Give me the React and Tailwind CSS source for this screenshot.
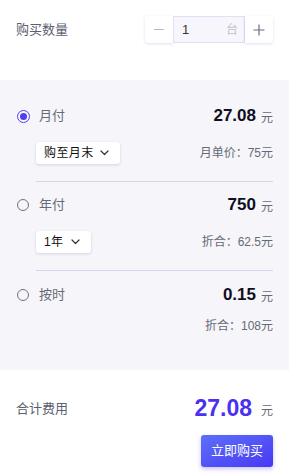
import React, { useState } from "react";

const font = { fontFamily: '"Liberation Sans", "Noto Sans CJK SC", sans-serif' };

function Radio({ checked }) {
  if (checked) {
    return (
      <span className="w-[13px] h-[13px] rounded-full border-[1.5px] border-[#4f3ff0] flex items-center justify-center">
        <span className="w-[7px] h-[7px] rounded-full bg-[#4f3ff0]" />
      </span>
    );
  }
  return <span className="w-[12px] h-[12px] rounded-full border-[1.5px] border-[#6e7384]" />;
}

function Chevron() {
  return (
    <svg width="9" height="6" viewBox="0 0 9 6" fill="none">
      <path d="M1 1l3.5 3.5L8 1" stroke="#333" strokeWidth="1.2" strokeLinecap="round" strokeLinejoin="round" />
    </svg>
  );
}

function Dropdown({ label, width }) {
  return (
    <div
      className={`h-[22px] ${width} bg-white rounded-[3px] shadow-[0_1px_3px_rgba(60,60,120,0.18)] flex items-center justify-between pl-[8px] pr-[11px] text-[12px] tracking-[0.4px] text-[#111]`}
    >
      <span>{label}</span>
      <Chevron />
    </div>
  );
}

function Option({ checked, name, price, children, note }) {
  return (
    <div>
      <div className="flex items-center h-[20px]">
        <div className="w-[23px] pl-[1px] flex items-center">
          <Radio checked={checked} />
        </div>
        <span className="text-[13px] text-[#666a75]">{name}</span>
        <span className="ml-auto text-[17px] font-bold text-[#0f0f1e]">{price}</span>
        <span className="ml-[5px] text-[12px] text-[#666a75] mt-[3px]">元</span>
      </div>
      <div className="flex items-center justify-between pl-[20px] mt-[16px] h-[22px]">
        <div>{children}</div>
        <span className="text-[12px] text-[#666a75]">{note}</span>
      </div>
    </div>
  );
}

export default function App() {
  const [qty] = useState(1);

  return (
    <div className="w-[289px] h-[474px] bg-white flex flex-col" style={font}>
      <div className="h-[80px] shrink-0 px-[16px] pt-[16px]">
        <div className="flex items-center justify-between h-[27px]">
          <span className="text-[13px] text-[#5b6070]">购买数量</span>
          <div className="flex h-[27px]">
            <button className="w-[28px] h-full bg-white rounded-l-[3px] shadow-[0_1px_3px_rgba(80,70,180,0.18)] flex items-center justify-center">
              <span className="w-[10px] h-[1px] bg-[#b8bcc8]" />
            </button>
            <div className="w-[72px] h-full bg-[#f7f6fc] border border-[#e2def5] flex items-center justify-between pl-[8px] pr-[6px]">
              <span className="text-[13px] text-[#333]">{qty}</span>
              <span className="text-[12px] text-[#c0c2cc]">台</span>
            </div>
            <button className="w-[28px] h-full bg-white rounded-r-[3px] shadow-[0_1px_3px_rgba(80,70,180,0.18)] flex items-center justify-center">
              <svg width="12" height="12" viewBox="0 0 12 12">
                <path d="M6 0.5v11M0.5 6h11" stroke="#6b7080" strokeWidth="1.2" />
              </svg>
            </button>
          </div>
        </div>
      </div>

      <div className="h-[290px] shrink-0 bg-[#f5f5fa] pl-[16px] pr-[16px] pt-[26px]">
        <Option checked name="月付" price="27.08" note="月单价：75元">
          <Dropdown label="购至月末" width="w-[84px]" />
        </Option>
        <div className="ml-[20px] mt-[17px] h-px bg-[#d6d6f0]" />
        <div className="mt-[13px]">
          <Option name="年付" price="750" note="折合：62.5元">
            <Dropdown label="1年" width="w-[55px]" />
          </Option>
        </div>
        <div className="ml-[20px] mt-[17px] h-px bg-[#d6d6f0]" />
        <div className="mt-[14px]">
          <div className="flex items-center h-[20px]">
            <div className="w-[23px] pl-[1px] flex items-center">
              <Radio />
            </div>
            <span className="text-[13px] text-[#666a75]">按时</span>
            <span className="ml-auto text-[17px] font-bold text-[#0f0f1e]">0.15</span>
            <span className="ml-[5px] text-[12px] text-[#666a75] mt-[3px]">元</span>
          </div>
          <div className="flex justify-end mt-[12px]">
            <span className="text-[12px] text-[#666a75]">折合：108元</span>
          </div>
        </div>
      </div>

      <div className="flex-1 px-[16px] pt-[21px]">
        <div className="flex items-center">
          <span className="text-[13px] text-[#5b6070]">合计费用</span>
          <span className="ml-auto text-[23px] font-bold text-[#4b2ff2]">27.08</span>
          <span className="ml-[9px] text-[12px] text-[#666a75] mt-[6px]">元</span>
        </div>
        <div className="flex justify-end mt-[9px]">
          <button className="w-[72px] h-[32px] rounded-[3px] bg-gradient-to-br from-[#5d6ef8] to-[#4a35f3] text-white text-[13px] shadow-[0_2px_4px_rgba(70,60,220,0.3)]">
            立即购买
          </button>
        </div>
      </div>
    </div>
  );
}
